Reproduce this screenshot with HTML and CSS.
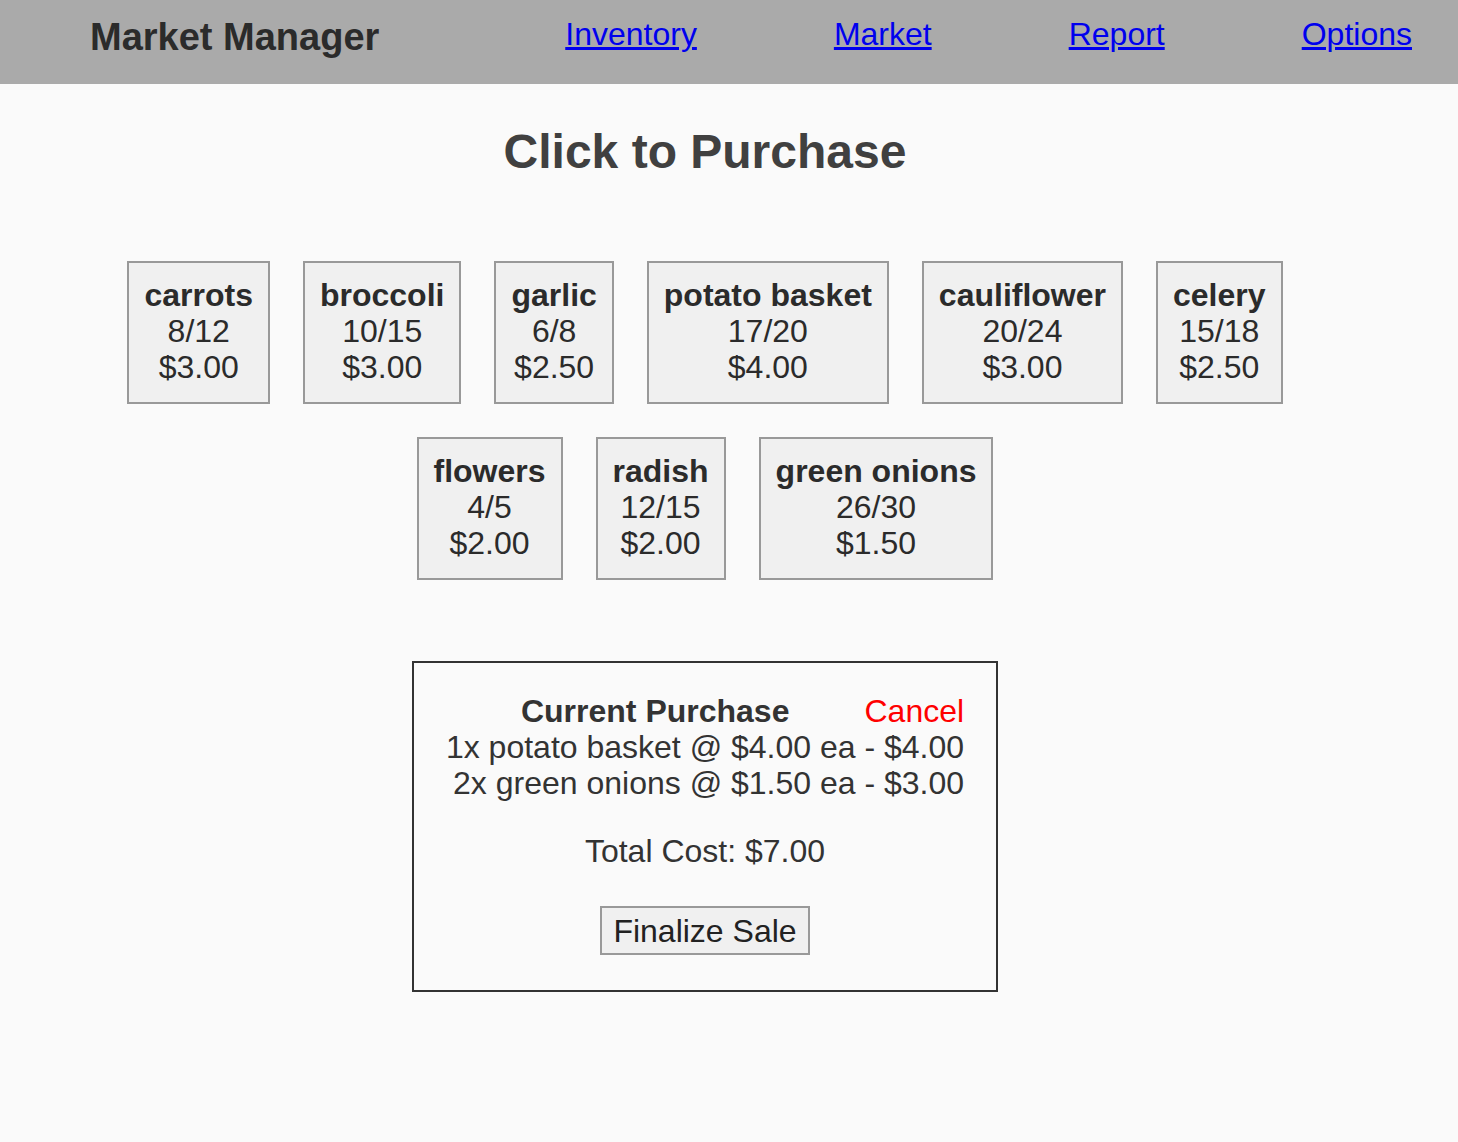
FILE: index.html
```html
<!DOCTYPE html>
<html>
<head>
<meta charset="utf-8">
<title>Market Manager</title>
<link rel="stylesheet" href="styles.css">
</head>
<body>
<header class="topbar">
  <div class="brand">Market Manager</div>
  <nav class="nav">
    <a href="#">Inventory</a>
    <a href="#">Market</a>
    <a href="#">Report</a>
    <a href="#">Options</a>
  </nav>
</header>
<main class="main">
  <h1 class="page-title">Click to Purchase</h1>
  <div class="items">
    <div class="item"><div class="item-name">carrots</div><div>8/12</div><div>$3.00</div></div>
    <div class="item"><div class="item-name">broccoli</div><div>10/15</div><div>$3.00</div></div>
    <div class="item"><div class="item-name">garlic</div><div>6/8</div><div>$2.50</div></div>
    <div class="item"><div class="item-name">potato basket</div><div>17/20</div><div>$4.00</div></div>
    <div class="item"><div class="item-name">cauliflower</div><div>20/24</div><div>$3.00</div></div>
    <div class="item"><div class="item-name">celery</div><div>15/18</div><div>$2.50</div></div>
    <div class="item"><div class="item-name">flowers</div><div>4/5</div><div>$2.00</div></div>
    <div class="item"><div class="item-name">radish</div><div>12/15</div><div>$2.00</div></div>
    <div class="item"><div class="item-name">green onions</div><div>26/30</div><div>$1.50</div></div>
  </div>
  <section class="purchase">
    <div class="purchase-head">
      <div class="purchase-title">Current Purchase</div>
      <div class="cancel">Cancel</div>
    </div>
    <div class="lines">
      <div>1x potato basket @ $4.00 ea - $4.00</div>
      <div>2x green onions @ $1.50 ea - $3.00</div>
    </div>
    <div class="total">Total Cost: $7.00</div>
    <button class="finalize">Finalize Sale</button>
  </section>
</main>
</body>
</html>
```
FILE: styles.css
```css
html, body {
  margin: 0;
  padding: 0;
}
body {
  background: #fafafa;
  font-family: "Liberation Sans", Arial, Helvetica, sans-serif;
  font-size: 32px;
  line-height: 36px;
  color: #333;
}
.topbar {
  height: 84px;
  background: #aaaaaa;
  display: flex;
  align-items: center;
  padding: 0 46px 0 90px;
}
.brand {
  font-size: 38px;
  font-weight: bold;
  color: #2b2b2b;
  line-height: 44px;
  margin-top: -10px;
}
.nav {
  margin-left: auto;
  display: flex;
  gap: 137px;
  margin-top: -16px;
}
.nav a {
  color: #0000ee;
  font-size: 32px;
  line-height: 36px;
}
.main {
  width: 1410px;
  display: flex;
  flex-direction: column;
  align-items: center;
}
.page-title {
  font-size: 48px;
  line-height: 56px;
  margin: 40px 0 0;
  color: #404040;
}
.items {
  width: 1250px;
  margin-top: 81px;
  display: flex;
  flex-wrap: wrap;
  justify-content: center;
  gap: 33px;
}
.item {
  background: #f0f0f0;
  border: 2px solid #999;
  padding: 14px 15px 17px;
  text-align: center;
  color: #2b2b2b;
}
.item-name {
  font-weight: bold;
}
.purchase {
  margin-top: 81px;
  border: 2px solid #333;
  padding: 30px 32px 35px;
  display: flex;
  flex-direction: column;
  align-items: center;
}
.purchase-head {
  display: flex;
  align-self: stretch;
}
.purchase-title {
  flex: 1;
  text-align: center;
  font-weight: bold;
}
.cancel {
  color: #ff0000;
}
.lines {
  text-align: right;
  align-self: stretch;
}
.total {
  margin-top: 32px;
}
.finalize {
  margin-top: 37px;
  font-family: "Liberation Sans", Arial, Helvetica, sans-serif;
  font-size: 32px;
  line-height: 36px;
  color: #222;
  background: #f0f0f0;
  border: 2px solid #999;
  padding: 5px 11px 4px;
}
```
